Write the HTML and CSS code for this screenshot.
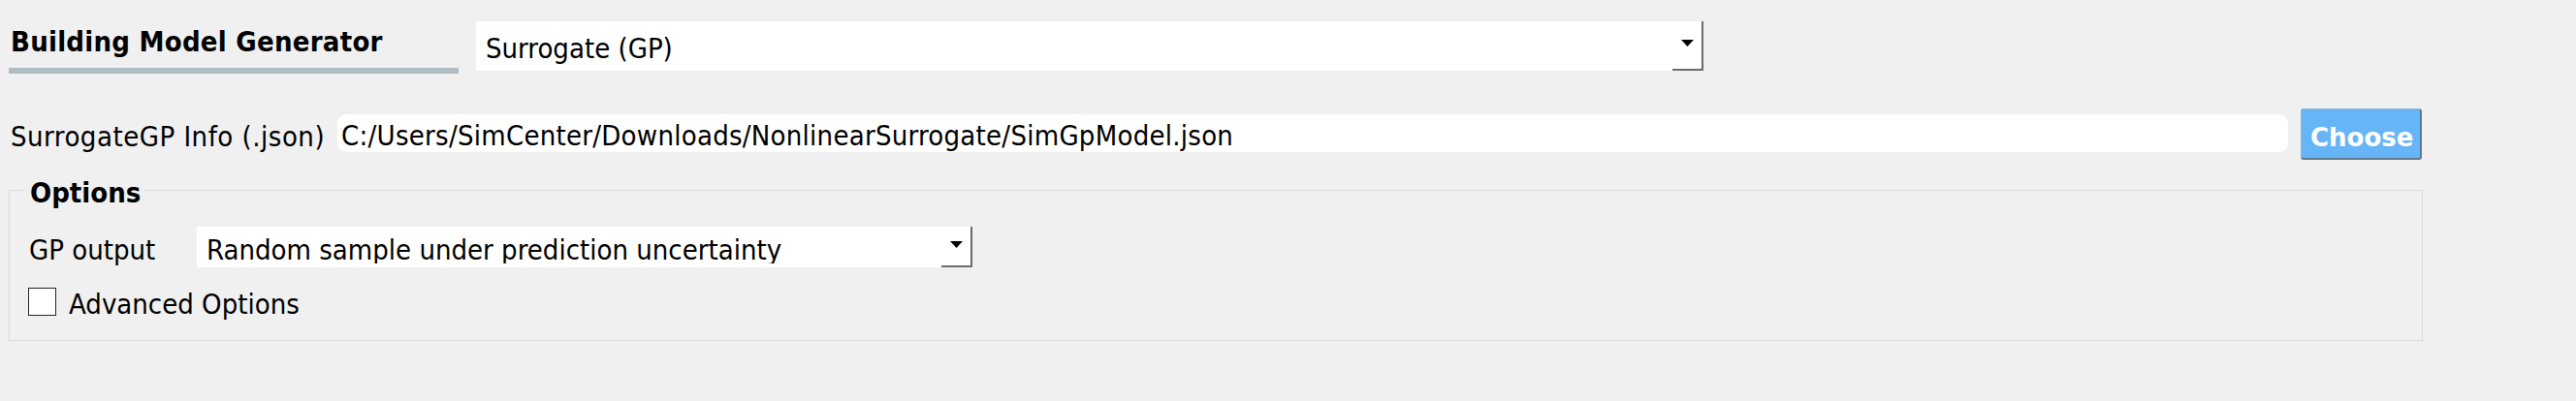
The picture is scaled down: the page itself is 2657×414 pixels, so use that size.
FILE: index.html
```html
<!DOCTYPE html>
<html>
<head>
<meta charset="utf-8">
<link rel="stylesheet" href="styles.css">
</head>
<body>
<div class="page">
  <div class="row row-top">
    <div class="title-block">
      <div class="title">Building Model Generator</div>
      <div class="title-bar"></div>
    </div>
    <div class="combo combo-main">
      <div class="combo-text">Surrogate (GP)</div>
      <div class="combo-btn"><svg class="arrow" width="13" height="7" viewBox="0 0 13 7"><path d="M0 0H13L6.5 7Z"/></svg></div>
    </div>
  </div>
  <div class="row row-file">
    <div class="file-label">SurrogateGP Info (.json)</div>
    <div class="line-edit">C:/Users/SimCenter/Downloads/NonlinearSurrogate/SimGpModel.json</div>
    <div class="btn-choose">Choose</div>
  </div>
  <div class="group">
    <div class="group-title">Options</div>
    <div class="row row-gp">
      <div class="gp-label">GP output</div>
      <div class="combo combo-gp">
        <div class="combo-text">Random sample under prediction uncertainty</div>
        <div class="combo-btn"><svg class="arrow" width="13" height="7" viewBox="0 0 13 7"><path d="M0 0H13L6.5 7Z"/></svg></div>
      </div>
    </div>
    <div class="row row-check">
      <span class="checkbox"></span>
      <span class="check-label">Advanced Options</span>
    </div>
  </div>
</div>
</body>
</html>
```
FILE: styles.css
```css
html, body {
  margin: 0;
  padding: 0;
  background: #f0f0f0;
}
body {
  font-family: "DejaVu Sans Condensed", "DejaVu Sans", sans-serif;
  font-size: 29px;
  color: #000;
  width: 2657px;
  height: 414px;
  overflow: hidden;
}
.page {
  width: 2490px;
  margin-left: 9px;
  padding-top: 22px;
}
.row {
  display: flex;
  align-items: flex-start;
}

/* top row */
.title-block {
  width: 464px;
  display: flex;
  flex-direction: column;
}
.title {
  margin-top: 4px;
  padding-left: 2px;
  line-height: 34px;
  font-weight: bold;
  letter-spacing: 0.25px;
  white-space: nowrap;
}
.title-bar {
  margin-top: 10px;
  height: 6px;
  background: #afbcc4;
}
.combo {
  display: flex;
  background: #fff;
  box-sizing: border-box;
}
.combo-main {
  margin-left: 18px;
  width: 1266px;
  height: 51px;
}
.combo-text {
  flex: 1;
  white-space: nowrap;
  overflow: hidden;
  box-sizing: border-box;
}
.combo-main .combo-text {
  padding-left: 10px;
  padding-top: 5px;
  line-height: 46px;
}
.combo-btn {
  width: 32px;
  box-sizing: border-box;
  border-right: 2px solid #6b6b6b;
  border-bottom: 2px solid #6b6b6b;
  display: flex;
  align-items: center;
  padding-left: 9px;
}
.combo-main .combo-btn {
  padding-bottom: 4px;
}
.arrow {
  display: block;
  fill: #000;
}

/* file row */
.row-file {
  margin-top: 36px;
}
.file-label {
  width: 339px;
  box-sizing: border-box;
  padding-left: 2px;
  margin-top: 12px;
  line-height: 34px;
  letter-spacing: 0.5px;
  white-space: nowrap;
}
.line-edit {
  width: 2012px;
  height: 39px;
  margin-top: 6px;
  box-sizing: border-box;
  background: #fff;
  border-radius: 9px;
  padding-left: 4px;
  padding-top: 6px;
  line-height: 33px;
  letter-spacing: 0.25px;
  white-space: nowrap;
  overflow: hidden;
}
.btn-choose {
  margin-left: 13px;
  width: 125px;
  height: 53px;
  box-sizing: border-box;
  background: #66b5f6;
  border-top: 1px solid #88b6d2;
  border-left: 1px solid #88b6d2;
  border-right: 2px solid #5f7a8c;
  border-bottom: 2px solid #5f7a8c;
  border-radius: 3px;
  color: #fff;
  font-family: "DejaVu Sans", sans-serif;
  font-weight: bold;
  font-size: 26px;
  line-height: 42px;
  padding-top: 8px;
  padding-left: 9px;
  white-space: nowrap;
}

/* group box */
.group {
  position: relative;
  margin-top: 31px;
  border: 1px solid #dadada;
  padding: 37px 0 20px 20px;
}
.group-title {
  position: absolute;
  left: 15px;
  top: -15px;
  padding: 0 4px 0 6px;
  background: #f0f0f0;
  font-weight: bold;
  line-height: 34px;
}
.gp-label {
  width: 173px;
  margin-top: 7px;
  line-height: 34px;
  white-space: nowrap;
}
.combo-gp {
  width: 800px;
  height: 42px;
}
.combo-gp .combo-text {
  padding-left: 10px;
  padding-top: 7px;
  height: 38px;
  line-height: 34px;
}
.combo-gp .combo-btn {
  padding-bottom: 3px;
}
.row-check {
  margin-top: 21px;
}
.checkbox {
  width: 29px;
  height: 29px;
  box-sizing: border-box;
  margin-left: -1px;
  background: #fff;
  border: 1px solid #262626;
}
.check-label {
  margin-left: 13px;
  line-height: 34px;
  white-space: nowrap;
}
```
